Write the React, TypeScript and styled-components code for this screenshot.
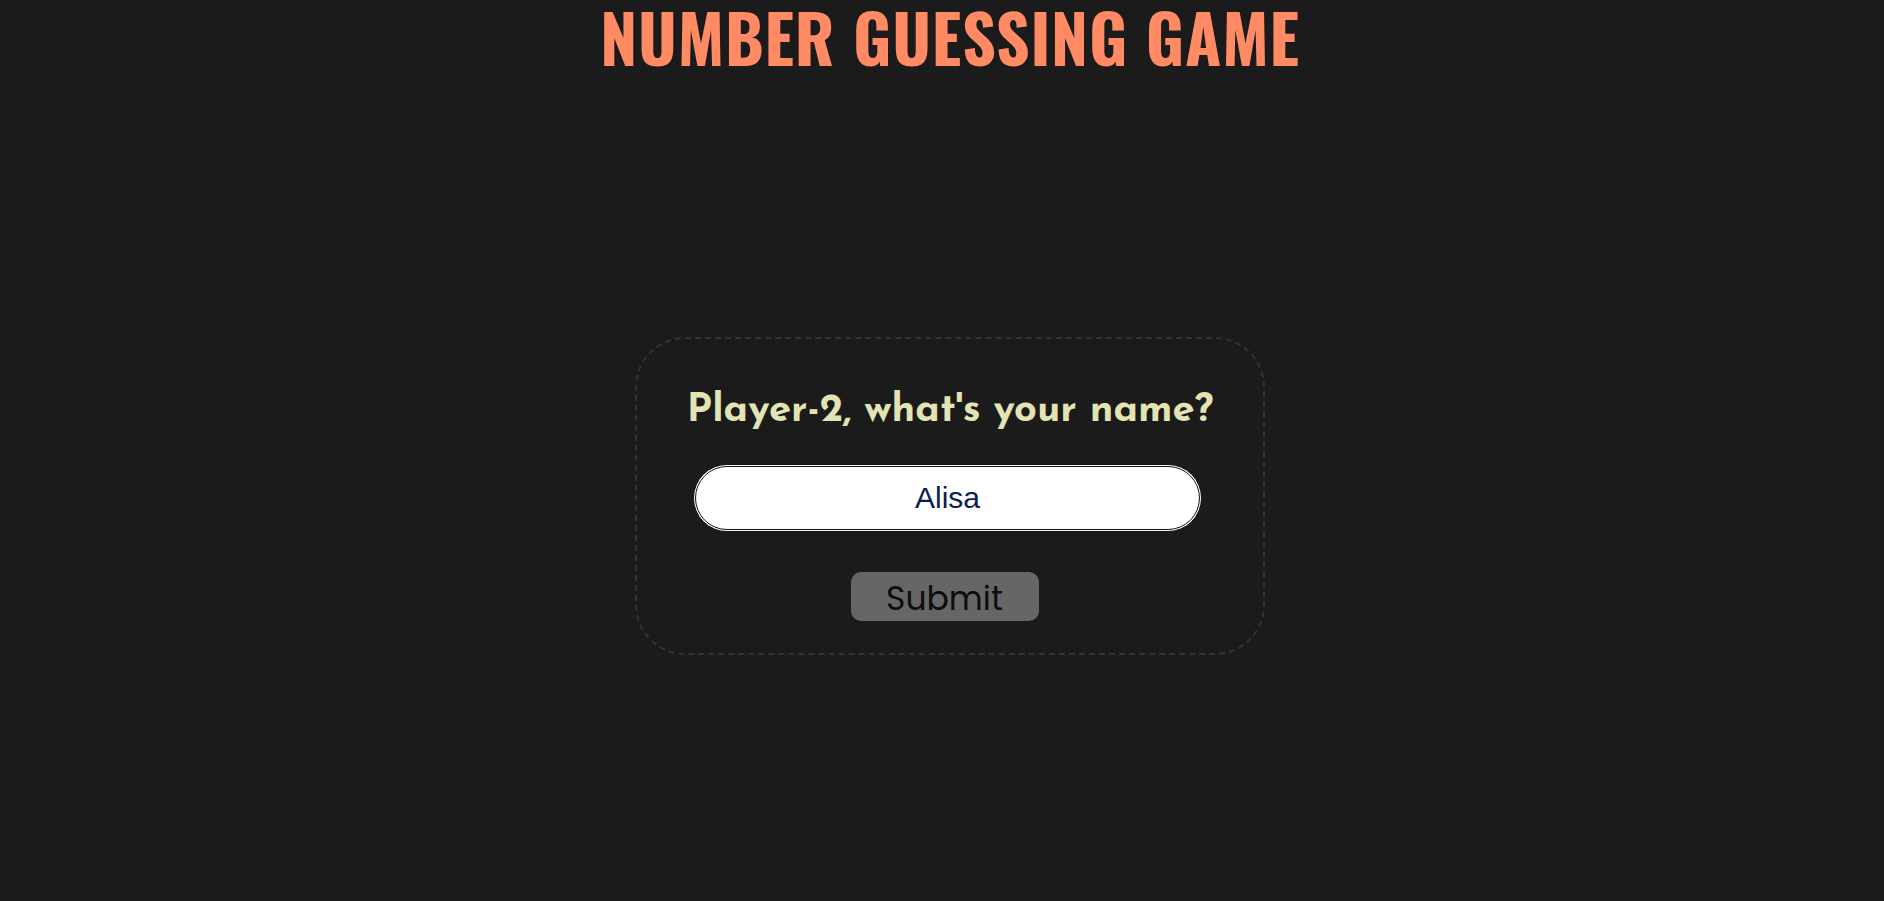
import React, { useEffect, useRef, useState } from "react";
import styled, { createGlobalStyle } from "styled-components";

const GlobalStyle = createGlobalStyle`
  html, body {
    margin: 0;
    padding: 0;
    background: #1b1b1b;
    overflow: hidden;
  }
  * { box-sizing: border-box; }
`;

const Page = styled.main`
  min-height: 901px;
  padding-left: 16px;
  display: flex;
  flex-direction: column;
  align-items: center;
  background: #1b1b1b;
`;

const TitleRow = styled.header`
  width: 100%;
  height: 80px;
  display: flex;
  justify-content: center;
  align-items: flex-start;
`;

const Title = styled.h1`
  margin: 0;
  font-family: "Oswald", "DejaVu Sans Condensed", sans-serif;
  font-weight: 700;
  font-size: 66px;
  line-height: 72px;
  letter-spacing: 0.8px;
  color: #ff8a64;
  white-space: nowrap;
`;

const Card = styled.section`
  margin-top: 257px;
  width: 630px;
  border: 2px dashed #333333;
  border-radius: 50px;
  padding: 48px 0 32px;
  display: flex;
  flex-direction: column;
  align-items: center;
`;

const Prompt = styled.h2`
  margin: 0;
  font-family: "Josefin Sans", Lato, "Noto Sans", sans-serif;
  font-weight: 700;
  font-size: 40px;
  line-height: 48px;
  color: #e3e3b4;
  white-space: nowrap;
`;

const NameInput = styled.input`
  margin: 29px 5px 0 0;
  width: 509px;
  height: 68px;
  border: 3px double #111111;
  border-radius: 34px;
  background: #ffffff;
  font-family: "Liberation Sans", Arial, sans-serif;
  font-size: 30px;
  color: #0a1f4f;
  caret-color: #0a1f4f;
  text-align: center;
  outline: none;
  padding: 0 20px;
`;

const SubmitButton = styled.button`
  margin: 40px 11px 0 0;
  width: 188px;
  height: 49px;
  border: none;
  border-radius: 10px;
  background: #666666;
  color: #0d0d0d;
  font-family: "Poppins", "DejaVu Sans", sans-serif;
  font-weight: 400;
  font-size: 33px;
  line-height: 45px;
  padding: 4px 0 0;
  cursor: pointer;
`;

export default function App() {
  const [name, setName] = useState("Alisa");
  const ref = useRef<HTMLInputElement>(null);

  useEffect(() => {
    const el = ref.current;
    if (el) {
      el.focus();
      el.setSelectionRange(el.value.length, el.value.length);
    }
  }, []);

  return (
    <>
      <GlobalStyle />
      <Page>
        <TitleRow>
          <Title>NUMBER GUESSING GAME</Title>
        </TitleRow>
        <Card>
          <Prompt>Player-2, what's your name?</Prompt>
          <NameInput
            ref={ref}
            value={name}
            onChange={(e) => setName(e.target.value)}
          />
          <SubmitButton type="button">Submit</SubmitButton>
        </Card>
      </Page>
    </>
  );
}
